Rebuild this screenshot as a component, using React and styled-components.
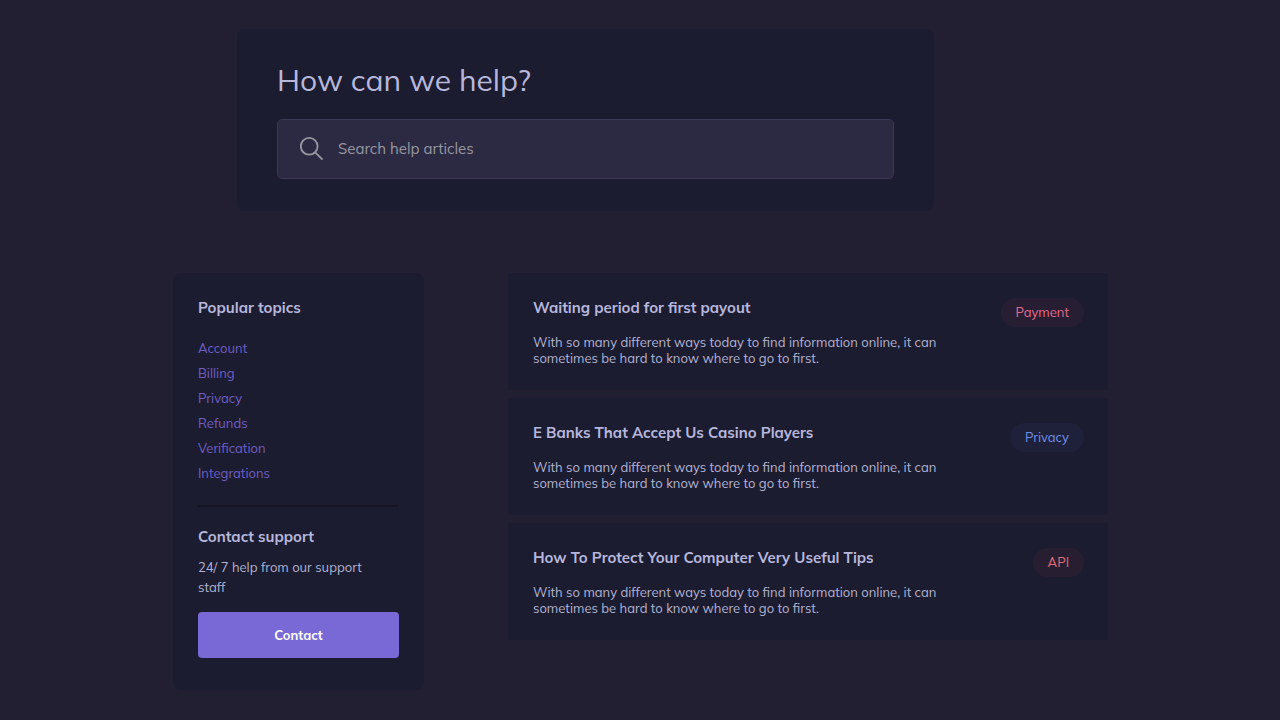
import React from "react";
import styled, { createGlobalStyle } from "styled-components";

const GlobalStyle = createGlobalStyle`
  *, *::before, *::after { box-sizing: border-box; }
  body {
    margin: 0;
    background: #221f33;
    color: #b3b3d1;
    font-family: Mulish, Lato, sans-serif;
    font-size: 13px;
  }
  h1, h2, h3, p, ul { margin: 0; padding: 0; }
`;

const Page = styled.main`
  padding: 29px 172px 29px 173px;

  @media (max-width: 1000px) {
    padding: 24px;
  }
`;

const Hero = styled.section`
  margin: 0 174px 0 64px;
  padding: 31px 40px 32px;
  border-radius: 8px;
  background: #1c1c30;

  @media (max-width: 1000px) {
    margin: 0;
  }
`;

const HeroTitle = styled.h1`
  margin-bottom: 19px;
  font-size: 30px;
  font-weight: 400;
  line-height: 40px;
  color: #b7b7dc;
`;

const SearchField = styled.label`
  display: flex;
  align-items: center;
  gap: 14px;
  height: 60px;
  padding: 0 22px;
  border: 1px solid #3a3854;
  border-radius: 5px;
  background: #2b2a42;
  color: #9897a1;
`;

const SearchIcon = styled.svg`
  flex: none;
  width: 24px;
  height: 24px;
`;

const SearchInput = styled.input`
  flex: 1;
  min-width: 0;
  padding: 0;
  border: 0;
  outline: 0;
  background: none;
  color: #b7b7dc;
  font: inherit;
  font-size: 15px;
  line-height: 24px;

  &::placeholder {
    color: #9897a1;
    opacity: 1;
  }
`;

const Columns = styled.div`
  display: grid;
  grid-template-columns: 251px minmax(0, 1fr);
  align-items: start;
  gap: 84px;
  margin-top: 62px;

  @media (max-width: 800px) {
    grid-template-columns: minmax(0, 1fr);
    gap: 24px;
  }
`;

const Sidebar = styled.aside`
  padding: 25px 25px 32px;
  border-radius: 8px;
  background: #1c1c30;
`;

const Heading = styled.h2`
  font-size: 15px;
  font-weight: 700;
  line-height: 20px;
  color: #b7b7dc;
`;

const TopicList = styled.ul`
  margin-top: 18px;
  list-style: none;
`;

const TopicLink = styled.a`
  display: block;
  line-height: 25px;
  color: #6f5fc4;
  text-decoration: none;

  &:hover { text-decoration: underline; }
`;

const Divider = styled.hr`
  height: 2px;
  margin: 19px 0 20px;
  border: 0;
  background: #151526;
`;

const SupportText = styled.p`
  max-width: 180px;
  margin: 10px 0 15px;
  line-height: 20px;
`;

const ContactButton = styled.button`
  display: block;
  width: 100%;
  height: 46px;
  border: 0;
  border-radius: 4px;
  background: #7969d6;
  color: #fff;
  font: inherit;
  font-weight: 700;
  cursor: pointer;
`;

const ArticleList = styled.div`
  display: grid;
  gap: 8px;
`;

const Article = styled.article`
  display: flex;
  align-items: flex-start;
  justify-content: space-between;
  gap: 24px;
  padding: 25px 24px 24px 25px;
  border-radius: 2px;
  background: #1c1c30;
`;

const Excerpt = styled.p`
  max-width: 420px;
  margin-top: 16px;
  line-height: 16px;
`;

const tagColors = {
  pink: { text: "#e56a8c", fill: "#271e34" },
  blue: { text: "#6f8fe8", fill: "#1f213a" },
  red: { text: "#e06c75", fill: "#271e32" },
};

const Tag = styled.span`
  flex: none;
  padding: 0 15px;
  border-radius: 15px;
  line-height: 29px;
  color: ${({ $tone }) => tagColors[$tone].text};
  background: ${({ $tone }) => tagColors[$tone].fill};
`;

const topics = ["Account", "Billing", "Privacy", "Refunds", "Verification", "Integrations"];

const excerpt =
  "With so many different ways today to find information online, it can sometimes be hard to know where to go to first.";

const articles = [
  { title: "Waiting period for first payout", tag: "Payment", tone: "pink" },
  { title: "E Banks That Accept Us Casino Players", tag: "Privacy", tone: "blue" },
  { title: "How To Protect Your Computer Very Useful Tips", tag: "API", tone: "red" },
];

export default function App() {
  return (
    <>
      <GlobalStyle />
      <Page>
        <Hero>
          <HeroTitle>How can we help?</HeroTitle>
          <SearchField htmlFor="help-search">
            <SearchIcon viewBox="0 0 24 24" fill="none" stroke="currentColor" strokeWidth="1.8" aria-hidden="true">
              <circle cx="9.2" cy="9.3" r="8.4" />
              <path d="M15.2 15.3 22.6 22.7" />
            </SearchIcon>
            <SearchInput id="help-search" type="text" aria-label="Search help articles" placeholder="Search help articles" />
          </SearchField>
        </Hero>
        <Columns>
          <Sidebar>
            <Heading>Popular topics</Heading>
            <TopicList>
              {topics.map((topic) => (
                <li key={topic}>
                  <TopicLink href={"#" + topic.toLowerCase()}>{topic}</TopicLink>
                </li>
              ))}
            </TopicList>
            <Divider />
            <Heading>Contact support</Heading>
            <SupportText>24/ 7 help from our support staff</SupportText>
            <ContactButton type="button">Contact</ContactButton>
          </Sidebar>
          <ArticleList>
            {articles.map(({ title, tag, tone }) => (
              <Article key={title}>
                <div>
                  <Heading>{title}</Heading>
                  <Excerpt>{excerpt}</Excerpt>
                </div>
                <Tag $tone={tone}>{tag}</Tag>
              </Article>
            ))}
          </ArticleList>
        </Columns>
      </Page>
    </>
  );
}
